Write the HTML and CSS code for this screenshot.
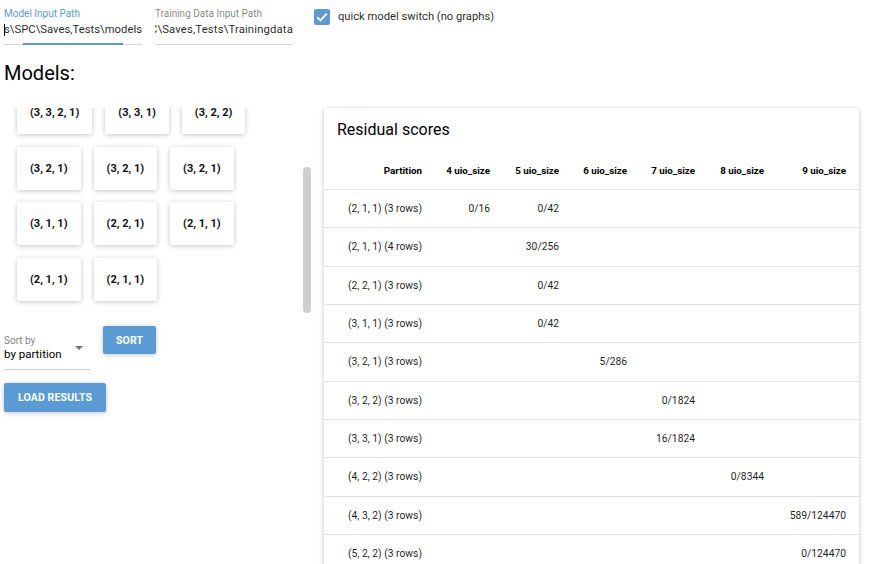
FILE: index.html
```html
<!DOCTYPE html>
<html>
<head>
<meta charset="utf-8">
<link rel="stylesheet" href="styles.css">
</head>
<body>
<div class="top">
  <div class="field">
    <div class="field-label focused">Model Input Path</div>
    <div class="field-value"><span class="caret"></span><span class="val-text">s\SPC\Saves,Tests\models</span></div>
    <div class="underline"><div class="focus-bar"></div></div>
  </div>
  <div class="field">
    <div class="field-label">Training Data Input Path</div>
    <div class="field-value"><span class="val-text wide">C\Saves,Tests\Trainingdata</span></div>
    <div class="underline"></div>
  </div>
  <label class="check">
    <span class="box"><svg width="16" height="16" viewBox="0 0 16 16"><path d="M3.2 8.3 L6.4 11.4 L12.9 4.6" fill="none" stroke="#fff" stroke-width="1.9"/></svg></span>
    <span class="check-text">quick model switch (no graphs)</span>
  </label>
</div>

<h2 class="models-title">Models:</h2>

<div class="main">
  <div class="left">
    <div class="scroll">
      <div class="cards">
        <div class="card-row">
          <div class="card">(3, 3, 2, 1)</div>
          <div class="card">(3, 3, 1)</div>
          <div class="card">(3, 2, 2)</div>
        </div>
        <div class="card-row">
          <div class="card">(3, 2, 1)</div>
          <div class="card">(3, 2, 1)</div>
          <div class="card">(3, 2, 1)</div>
        </div>
        <div class="card-row">
          <div class="card">(3, 1, 1)</div>
          <div class="card">(2, 2, 1)</div>
          <div class="card">(2, 1, 1)</div>
        </div>
        <div class="card-row">
          <div class="card">(2, 1, 1)</div>
          <div class="card">(2, 1, 1)</div>
        </div>
      </div>
      <div class="track"><div class="thumb"></div></div>
    </div>
    <div class="controls">
      <div class="sort-row">
        <div class="select">
          <div class="select-label">Sort by</div>
          <div class="select-value">by partition</div>
          <span class="arrow"></span>
          <div class="select-line"></div>
        </div>
        <div class="btn sort-btn">SORT</div>
      </div>
      <div class="btn load-btn">LOAD RESULTS</div>
    </div>
  </div>

  <div class="panel">
    <div class="panel-title">Residual scores</div>
    <div class="row head">
      <div>Partition</div><div>4 uio_size</div><div>5 uio_size</div><div>6 uio_size</div><div>7 uio_size</div><div>8 uio_size</div><div>9 uio_size</div>
    </div>
    <div class="row"><div>(2, 1, 1) (3 rows)</div><div>0/16</div><div>0/42</div><div></div><div></div><div></div><div></div></div>
    <div class="row"><div>(2, 1, 1) (4 rows)</div><div></div><div>30/256</div><div></div><div></div><div></div><div></div></div>
    <div class="row"><div>(2, 2, 1) (3 rows)</div><div></div><div>0/42</div><div></div><div></div><div></div><div></div></div>
    <div class="row"><div>(3, 1, 1) (3 rows)</div><div></div><div>0/42</div><div></div><div></div><div></div><div></div></div>
    <div class="row"><div>(3, 2, 1) (3 rows)</div><div></div><div></div><div>5/286</div><div></div><div></div><div></div></div>
    <div class="row"><div>(3, 2, 2) (3 rows)</div><div></div><div></div><div></div><div>0/1824</div><div></div><div></div></div>
    <div class="row"><div>(3, 3, 1) (3 rows)</div><div></div><div></div><div></div><div>16/1824</div><div></div><div></div></div>
    <div class="row"><div>(4, 2, 2) (3 rows)</div><div></div><div></div><div></div><div></div><div>0/8344</div><div></div></div>
    <div class="row"><div>(4, 3, 2) (3 rows)</div><div></div><div></div><div></div><div></div><div></div><div>589/124470</div></div>
    <div class="row"><div>(5, 2, 2) (3 rows)</div><div></div><div></div><div></div><div></div><div></div><div>0/124470</div></div>
  </div>
</div>
</body>
</html>
```
FILE: styles.css
```css
html, body {
  margin: 0;
  padding: 0;
  background: #fff;
  font-family: Roboto, "Liberation Sans", sans-serif;
  color: rgba(0, 0, 0, 0.87);
  overflow: hidden;
}

.top {
  display: flex;
  align-items: flex-start;
  height: 50px;
  padding-left: 4px;
}

.field {
  width: 138px;
  margin-right: 13px;
  padding-top: 8px;
}

.field-label {
  font-size: 10px;
  line-height: 12px;
  color: rgba(0, 0, 0, 0.5);
  white-space: nowrap;
}

.field-label.focused {
  color: #5b9bd5;
}

.field-value {
  display: flex;
  justify-content: flex-end;
  align-items: center;
  overflow: hidden;
  margin-top: 3px;
  height: 14px;
  font-size: 11.3px;
  line-height: 14px;
  white-space: nowrap;
  position: relative;
}

.val-text {
  flex: none;
}

.val-text.wide {
  letter-spacing: 0.15px;
}

.caret {
  position: absolute;
  left: 0;
  top: 1px;
  width: 1px;
  height: 12px;
  background: #000;
}

.underline {
  position: relative;
  margin-top: 7px;
  height: 1px;
  background: #d6d6d6;
}

.focus-bar {
  position: absolute;
  left: 19px;
  top: -1px;
  width: 100px;
  height: 2px;
  background: #5b9bd5;
}

.check {
  display: flex;
  align-items: center;
  margin-left: 8px;
  padding-top: 9px;
}

.box {
  display: block;
  width: 16px;
  height: 16px;
  background: #5b9bd5;
  border-radius: 2px;
}

.box svg {
  display: block;
}

.check-text {
  margin-left: 8px;
  font-size: 11.2px;
  line-height: 16px;
  white-space: nowrap;
}

.models-title {
  margin: 11px 0 0;
  padding-left: 4px;
  font-size: 20px;
  line-height: 24px;
  font-weight: 400;
  color: #000;
}

.main {
  display: flex;
  align-items: flex-start;
  margin-top: 23px;
}

.left {
  width: 308px;
  margin-left: 4px;
  flex: none;
}

.scroll {
  display: flex;
  height: 205px;
  overflow: hidden;
}

.cards {
  flex: 1;
  padding-left: 13px;
  margin-top: -17px;
}

.card-row {
  display: flex;
  gap: 13px;
  padding: 0 0 12.5px;
}

.card {
  height: 43px;
  padding: 0 13px;
  display: flex;
  align-items: center;
  background: #fff;
  border-radius: 2px;
  box-shadow: 0 1px 6px rgba(0, 0, 0, 0.12), 0 1px 4px rgba(0, 0, 0, 0.12);
  font-size: 11px;
  line-height: 9px;
  font-weight: 700;
  color: #111;
  white-space: nowrap;
}

.track {
  width: 8px;
  margin-right: 1px;
  flex: none;
}

.thumb {
  margin-top: 59px;
  height: 146px;
  background: #cecece;
  border-radius: 4px;
}

.controls {
  margin-top: 13px;
}

.sort-row {
  display: flex;
  align-items: flex-start;
}

.select {
  position: relative;
  width: 86px;
  height: 44px;
}

.select-label {
  margin-top: 9px;
  font-size: 10px;
  line-height: 12px;
  color: rgba(0, 0, 0, 0.55);
}

.select-value {
  font-size: 11.5px;
  line-height: 14px;
  color: #000;
  white-space: nowrap;
}

.arrow {
  position: absolute;
  right: 7px;
  top: 20px;
  width: 0;
  height: 0;
  border-left: 4px solid transparent;
  border-right: 4px solid transparent;
  border-top: 4px solid #757575;
}

.select-line {
  margin-top: 8px;
  height: 1px;
  background: #d0d0d0;
}

.btn {
  display: flex;
  align-items: center;
  justify-content: center;
  background: #5b9bd5;
  color: #fff;
  border-radius: 2px;
  font-size: 10.5px;
  font-weight: 700;
  letter-spacing: 0.15px;
  box-shadow: 0 1px 6px rgba(0, 0, 0, 0.12), 0 1px 4px rgba(0, 0, 0, 0.12);
  white-space: nowrap;
}

.sort-btn {
  margin-left: 13px;
  width: 53px;
  height: 28px;
}

.load-btn {
  margin-top: 13px;
  width: 102px;
  height: 29px;
}

.panel {
  margin-left: 12px;
  width: 535px;
  flex: none;
  background: #fff;
  border-radius: 2px;
  box-shadow: 0 1px 6px rgba(0, 0, 0, 0.12), 0 1px 4px rgba(0, 0, 0, 0.12);
  padding-bottom: 20px;
}

.panel-title {
  padding: 12px 13px 0;
  font-size: 16px;
  line-height: 20px;
  color: #000;
}

.row {
  display: grid;
  grid-template-columns: 98px 68px 69px 68px 68px 69px 82px;
  padding-right: 13px;
  align-items: center;
  height: 38.33px;
  box-sizing: border-box;
  border-bottom: 1px solid #e0e0e0;
  font-size: 10.3px;
  color: rgba(0, 0, 0, 0.9);
}

.row > div {
  text-align: right;
  white-space: nowrap;
}

.row.head {
  margin-top: 11px;
  height: 39px;
  font-size: 9.8px;
  font-weight: 700;
  color: #000;
}
```
